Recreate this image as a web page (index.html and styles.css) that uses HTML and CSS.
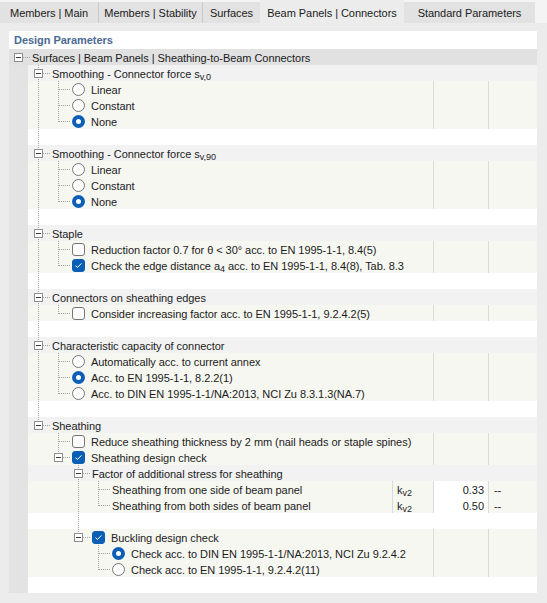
FILE: index.html
```html
<!DOCTYPE html>
<html lang="en">
<head>
	<meta charset="UTF-8">
	<title>Design Parameters</title>
	<link rel="stylesheet" href="styles.css">
</head>
<body>
	<nav class="tabs">
		<div class="tab tab-main sep">Members | Main</div>
		<div class="tab tab-stability sep">Members | Stability</div>
		<div class="tab tab-surfaces">Surfaces</div>
		<div class="tab tab-panels active">Beam Panels | Connectors</div>
		<div class="tab tab-standard">Standard Parameters</div>
	</nav>

	<section class="page">
		<div class="panel">
			<div class="title">Design Parameters</div>

			<div class="row root">
				<span class="slot own"><span class="exp"></span></span>
				<span class="label">Surfaces | Beam Panels | Sheathing-to-Beam Connectors</span>
			</div>

			<!-- Smoothing v,0 -->
			<div class="row head">
				<div class="tree"><span class="slot own tee"><span class="exp"></span></span><span class="label">Smoothing - Connector force s<sub>v,0</sub></span></div>
			</div>
			<div class="row opt">
				<div class="tree"><span class="slot pipe"></span><span class="slot own tee"></span><span class="radio"></span><span class="label">Linear</span></div>
				<div class="cell"></div><div class="cell"></div>
			</div>
			<div class="row opt">
				<div class="tree"><span class="slot pipe"></span><span class="slot own tee"></span><span class="radio"></span><span class="label">Constant</span></div>
				<div class="cell"></div><div class="cell"></div>
			</div>
			<div class="row opt">
				<div class="tree"><span class="slot pipe"></span><span class="slot own elbow"></span><span class="radio on"></span><span class="label">None</span></div>
				<div class="cell"></div><div class="cell"></div>
			</div>
			<div class="row blank">
				<div class="tree"><span class="slot pipe"></span></div>
			</div>

			<!-- Smoothing v,90 -->
			<div class="row head">
				<div class="tree"><span class="slot own tee"><span class="exp"></span></span><span class="label">Smoothing - Connector force s<sub>v,90</sub></span></div>
			</div>
			<div class="row opt">
				<div class="tree"><span class="slot pipe"></span><span class="slot own tee"></span><span class="radio"></span><span class="label">Linear</span></div>
				<div class="cell"></div><div class="cell"></div>
			</div>
			<div class="row opt">
				<div class="tree"><span class="slot pipe"></span><span class="slot own tee"></span><span class="radio"></span><span class="label">Constant</span></div>
				<div class="cell"></div><div class="cell"></div>
			</div>
			<div class="row opt">
				<div class="tree"><span class="slot pipe"></span><span class="slot own elbow"></span><span class="radio on"></span><span class="label">None</span></div>
				<div class="cell"></div><div class="cell"></div>
			</div>
			<div class="row blank">
				<div class="tree"><span class="slot pipe"></span></div>
			</div>

			<!-- Staple -->
			<div class="row head">
				<div class="tree"><span class="slot own tee"><span class="exp"></span></span><span class="label">Staple</span></div>
			</div>
			<div class="row opt">
				<div class="tree"><span class="slot pipe"></span><span class="slot own tee"></span><span class="check"></span><span class="label">Reduction factor 0.7 for θ &lt; 30° acc. to EN 1995-1-1, 8.4(5)</span></div>
				<div class="cell"></div><div class="cell"></div>
			</div>
			<div class="row opt">
				<div class="tree"><span class="slot pipe"></span><span class="slot own elbow"></span><span class="check on"><svg viewBox="0 0 11 11"><path d="M2.5 5.6l1.9 1.9 4-4.1"/></svg></span><span class="label">Check the edge distance a<sub>4</sub> acc. to EN 1995-1-1, 8.4(8), Tab. 8.3</span></div>
				<div class="cell"></div><div class="cell"></div>
			</div>
			<div class="row blank">
				<div class="tree"><span class="slot pipe"></span></div>
			</div>

			<!-- Connectors on edges -->
			<div class="row head">
				<div class="tree"><span class="slot own tee"><span class="exp"></span></span><span class="label">Connectors on sheathing edges</span></div>
			</div>
			<div class="row opt">
				<div class="tree"><span class="slot pipe"></span><span class="slot own elbow"></span><span class="check"></span><span class="label">Consider increasing factor acc. to EN 1995-1-1, 9.2.4.2(5)</span></div>
				<div class="cell"></div><div class="cell"></div>
			</div>
			<div class="row blank">
				<div class="tree"><span class="slot pipe"></span></div>
			</div>

			<!-- Characteristic capacity -->
			<div class="row head">
				<div class="tree"><span class="slot own tee"><span class="exp"></span></span><span class="label">Characteristic capacity of connector</span></div>
			</div>
			<div class="row opt">
				<div class="tree"><span class="slot pipe"></span><span class="slot own tee"></span><span class="radio"></span><span class="label">Automatically acc. to current annex</span></div>
				<div class="cell"></div><div class="cell"></div>
			</div>
			<div class="row opt">
				<div class="tree"><span class="slot pipe"></span><span class="slot own tee"></span><span class="radio on"></span><span class="label">Acc. to EN 1995-1-1, 8.2.2(1)</span></div>
				<div class="cell"></div><div class="cell"></div>
			</div>
			<div class="row opt">
				<div class="tree"><span class="slot pipe"></span><span class="slot own elbow"></span><span class="radio"></span><span class="label">Acc. to DIN EN 1995-1-1/NA:2013, NCI Zu 8.3.1.3(NA.7)</span></div>
				<div class="cell"></div><div class="cell"></div>
			</div>
			<div class="row blank">
				<div class="tree"><span class="slot pipe"></span></div>
			</div>

			<!-- Sheathing -->
			<div class="row head">
				<div class="tree"><span class="slot own elbow"><span class="exp"></span></span><span class="label">Sheathing</span></div>
			</div>
			<div class="row opt">
				<div class="tree"><span class="slot"></span><span class="slot own tee"></span><span class="check"></span><span class="label">Reduce sheathing thickness by 2 mm (nail heads or staple spines)</span></div>
				<div class="cell"></div><div class="cell"></div>
			</div>
			<div class="row opt">
				<div class="tree"><span class="slot"></span><span class="slot own elbow"><span class="exp"></span></span><span class="check on"><svg viewBox="0 0 11 11"><path d="M2.5 5.6l1.9 1.9 4-4.1"/></svg></span><span class="label">Sheathing design check</span></div>
				<div class="cell"></div><div class="cell"></div>
			</div>
			<div class="row head">
				<div class="tree"><span class="slot"></span><span class="slot"></span><span class="slot own tee"><span class="exp"></span></span><span class="label">Factor of additional stress for sheathing</span></div>
			</div>
			<div class="row param">
				<div class="tree"><span class="slot"></span><span class="slot"></span><span class="slot pipe"></span><span class="slot own tee"></span><span class="label">Sheathing from one side of beam panel</span></div>
				<div class="cell sym">k<sub>v2</sub></div>
				<div class="cell val">0.33</div>
				<div class="cell unit">--</div>
			</div>
			<div class="row param">
				<div class="tree"><span class="slot"></span><span class="slot"></span><span class="slot pipe"></span><span class="slot own elbow"></span><span class="label">Sheathing from both sides of beam panel</span></div>
				<div class="cell sym">k<sub>v2</sub></div>
				<div class="cell val">0.50</div>
				<div class="cell unit">--</div>
			</div>
			<div class="row blank">
				<div class="tree"><span class="slot"></span><span class="slot"></span><span class="slot pipe"></span></div>
			</div>
			<div class="row opt">
				<div class="tree"><span class="slot"></span><span class="slot"></span><span class="slot own elbow"><span class="exp"></span></span><span class="check on"><svg viewBox="0 0 11 11"><path d="M2.5 5.6l1.9 1.9 4-4.1"/></svg></span><span class="label">Buckling design check</span></div>
				<div class="cell"></div><div class="cell"></div>
			</div>
			<div class="row opt">
				<div class="tree"><span class="slot"></span><span class="slot"></span><span class="slot"></span><span class="slot own tee"></span><span class="radio on"></span><span class="label">Check acc. to DIN EN 1995-1-1/NA:2013, NCI Zu 9.2.4.2</span></div>
				<div class="cell"></div><div class="cell"></div>
			</div>
			<div class="row opt">
				<div class="tree"><span class="slot"></span><span class="slot"></span><span class="slot"></span><span class="slot own elbow"></span><span class="radio"></span><span class="label">Check acc. to EN 1995-1-1, 9.2.4.2(11)</span></div>
				<div class="cell"></div><div class="cell"></div>
			</div>
			<div class="row blank">
				<div class="tree"></div>
			</div>
		</div>
	</section>
</body>
</html>
```

FILE: styles.css
```css
:root {
	--vdots: repeating-linear-gradient(to bottom, #a2a2a2 0 1px, transparent 1px 2px);
	--hdots: repeating-linear-gradient(to right, #a2a2a2 0 1px, transparent 1px 2px);
	--accent: #0a5fb4;
}
body {
	margin: 0;
	background: #ececec;
	font-family: "Liberation Sans", Arial, sans-serif;
	font-size: 11px;
	letter-spacing: -0.05px;
	color: #1b1b1b;
}

/* Tab strip */
.tabs {
	display: flex;
	height: 23px;
	background: #f4f4f4;
}
.tab {
	margin-top: 2px;
	height: 21px;
	padding-top: 1px;
	box-sizing: border-box;
	line-height: 20px;
	text-align: center;
	white-space: nowrap;
	background: #e2e2e2;
}
.tab.sep {
	border-right: 1px solid #cacaca;
}
.tab.active {
	margin-top: 0;
	height: 23px;
	padding-top: 3px;
	background: #ececec;
}
.tab-main { width: 99px; }
.tab-stability { width: 104px; }
.tab-surfaces { width: 57px; }
.tab-panels { width: 144px; }
.tab-standard { width: 131px; }

/* Parameter tree */
.page {
	padding: 8px 10px 10px 9px;
}
.panel {
	width: 528px;
	background: linear-gradient(to right, #e3e3e3 19px, #fff 19px);
}
.title {
	height: 18px;
	padding: 2px 0 0 5px;
	box-sizing: border-box;
	line-height: 14px;
	font-weight: bold;
	color: #4b6a93;
	background: #fff;
}
.row {
	height: 16px;
	margin-left: 19px;
	display: grid;
	grid-template-columns: 405px 55px 49px;
}
.row.root {
	margin-left: 0;
	display: flex;
	background: #e1e1e1;
}
.row.head {
	display: flex;
	background: #f2f2f2;
}
.row.blank {
	display: flex;
}
.row.opt {
	background: #f7f7f2;
}
.row.param {
	grid-template-columns: 364px 41px 55px 49px;
	background: #f7f7f2;
}
.tree {
	display: flex;
	align-items: center;
	height: 16px;
	min-width: 0;
}
.label {
	white-space: nowrap;
	line-height: 14px;
	padding-top: 2px;
}
sub {
	font-size: 9px;
	line-height: 0;
	vertical-align: -2px;
}

/* tree guides */
.slot {
	flex: none;
	display: flex;
	align-items: flex-start;
	width: 20px;
	height: 16px;
}
.slot.own {
	width: 24px;
}
.pipe {
	background: var(--vdots) 10px 0 / 1px 16px no-repeat;
}
.tee {
	background: var(--vdots) 10px 0 / 1px 16px no-repeat, var(--hdots) 11px 8px / 11px 1px no-repeat;
}
.elbow {
	background: var(--vdots) 10px 0 / 1px 9px no-repeat, var(--hdots) 11px 8px / 11px 1px no-repeat;
}
.root .own {
	width: 23px;
	background: var(--hdots) 14px 8px / 8px 1px no-repeat;
}
.exp {
	width: 9px;
	height: 9px;
	margin: 4px 0 0 6px;
	box-sizing: border-box;
	border: 1px solid #8e8e8e;
	background: linear-gradient(#3a3a3a, #3a3a3a) 1px 3px / 5px 1px no-repeat, #fff;
}
.root .exp {
	margin-left: 5px;
}

/* radio buttons and check boxes */
.radio,
.check {
	flex: none;
	width: 13px;
	height: 13px;
	margin-right: 6px;
	box-sizing: border-box;
	border: 1px solid #767676;
	background: #fbfbfb;
}
.radio {
	border-radius: 50%;
}
.radio.on {
	border: none;
	background: #fff;
	box-shadow: inset 0 0 0 4px var(--accent);
}
.check {
	border-radius: 3px;
}
.check.on {
	background: var(--accent);
	border-color: var(--accent);
}
.check svg {
	display: block;
	width: 11px;
	height: 11px;
	fill: none;
	stroke: #fff;
	stroke-width: 1;
}

/* value columns */
.cell {
	border-left: 1px solid #dadada;
	line-height: 14px;
	padding-top: 2px;
	white-space: nowrap;
}
.sym {
	padding-left: 4px;
}
.val {
	background: #fff;
	text-align: right;
	padding-right: 4px;
}
.unit {
	padding-left: 5px;
}
```
